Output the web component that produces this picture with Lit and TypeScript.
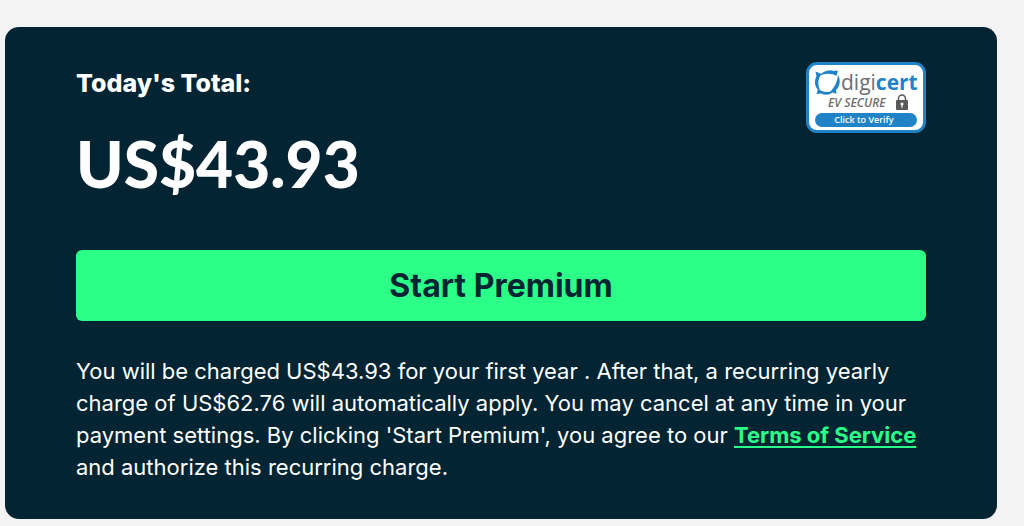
import { LitElement, html, css } from "lit";
import { customElement, property } from "lit/decorators.js";

@customElement("secure-badge")
export class SecureBadge extends LitElement {
  static styles = css`
    :host { display: block; flex: none; }
    .badge {
      box-sizing: border-box;
      display: block;
      width: 120px;
      height: 71px;
      border: 3px solid #1f83c6;
      border-radius: 11px;
      background: #fff;
      overflow: hidden;
    }
    svg { display: block; width: 100%; height: 100%; }
    text { font-family: "Open Sans", "Noto Sans", sans-serif; }
  `;

  render() {
    return html`
      <a class="badge" href="#verify" aria-label="DigiCert EV Secure, click to verify">
        <svg viewBox="0 0 114 65">
          <g fill="#1f83c6">
            <path d="M10 11C14 6 20 4 25 6L29 5.500L27.500 11C23 8 16 8 10 11Z" />
            <path d="M29 10C32 15 31 22 27 25L27.500 29L21.500 26.500C26 22 28.500 16 29 10Z" />
            <path d="M25.500 25C22 30 17 31 12 28.500L7.500 29L9 24C14 27.500 20 28 25.500 25Z" />
            <path d="M11.500 26.500C6 24 4.500 17 7.500 11L6.500 6.500L12.500 9C8.500 14 8.500 20 11.500 26.500Z" />
          </g>
          <text x="32" y="25" font-size="21" fill="#6d6e71">digi<tspan fill="#1f83c6" font-weight="700">cert</tspan></text>
          <text x="19" y="42" font-size="12" font-style="italic" font-weight="600" fill="#6d6e71">EV SECURE</text>
          <rect x="87" y="35" width="12" height="10" rx="1" fill="#58595b" />
          <path d="M89.500 35V33.500a3.500 3.500 0 0 1 7 0V35" fill="none" stroke="#58595b" stroke-width="1.500" />
          <path d="M93 37.500v5M91.500 39h3" stroke="#fff" stroke-width="1.300" />
          <rect x="6" y="48" width="102" height="14" rx="7" fill="#1f83c6" />
          <text x="55" y="58" font-size="9" font-weight="600" text-anchor="middle" fill="#fff">Click to Verify</text>
        </svg>
      </a>
    `;
  }
}

@customElement("app-root")
export class AppRoot extends LitElement {
  @property() total = "US$43.93";
  @property() renewal = "US$62.76";

  static styles = css`
    :host {
      display: block;
      box-sizing: border-box;
      min-height: 100vh;
      padding: 27px 27px 7px 5px;
      background: #f3f3f3;
      font-family: Inter, "Liberation Sans", sans-serif;
      color: #fff;
    }
    .card {
      background: #022433;
      border-radius: 14px;
      padding: 35px 71px 36px;
    }
    .summary {
      display: flex;
      justify-content: space-between;
      align-items: flex-start;
    }
    .label { margin: 0; font-size: 25px; line-height: 42px; font-weight: 800; }
    .amount {
      margin: 16px 0 0;
      font-family: Lato, Inter, sans-serif;
      font-size: 64px;
      line-height: 88px;
      font-weight: 900;
    }
    .start {
      display: block;
      width: 100%;
      margin: 42px 0 34px;
      padding: 0;
      border: 0;
      border-radius: 6px;
      background: #2bff88;
      color: #022433;
      font: inherit;
      font-size: 32px;
      line-height: 71px;
      font-weight: 700;
      cursor: pointer;
    }
    .terms { margin: 0; font-size: 22px; line-height: 32px; font-weight: 400; }
    .link {
      color: #2bff88;
      font-weight: 700;
      text-decoration: underline;
      text-decoration-thickness: 2px;
      text-underline-offset: 3px;
    }
  `;

  private get notice() {
    return (
      `You will be charged ${this.total} for your first year . After that, a recurring yearly ` +
      `charge of ${this.renewal} will automatically apply. You may cancel at any time in your ` +
      `payment settings. By clicking 'Start Premium', you agree to our `
    );
  }

  render() {
    return html`
      <main class="card">
        <div class="summary">
          <div>
            <h2 class="label">Today's Total:</h2>
            <p class="amount">${this.total}</p>
          </div>
          <secure-badge></secure-badge>
        </div>
        <button class="start" type="button">Start Premium</button>
        <p class="terms">
          ${this.notice}<a class="link" href="#terms">Terms of Service</a>
          and authorize this recurring charge.
        </p>
      </main>
    `;
  }
}
